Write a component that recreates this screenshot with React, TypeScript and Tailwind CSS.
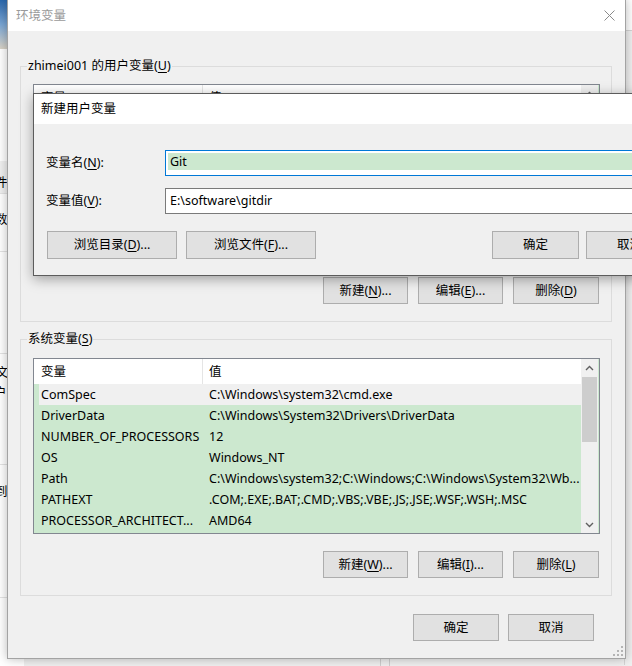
import React from "react";

function M({ children }: { children: React.ReactNode }) {
  return <span className="underline decoration-1 underline-offset-[2px]">{children}</span>;
}

function Btn({ children, className }: { children: React.ReactNode; className: string }) {
  return (
    <div className={"flex shrink-0 items-center justify-center border border-[#adadad] bg-[#e1e1e1] text-black " + className}>
      {children}
    </div>
  );
}

function Up() {
  return (
    <svg width="9" height="6" viewBox="0 0 9 6">
      <path d="M1 5 L4.5 1.5 L8 5" stroke="#606060" strokeWidth="1.4" fill="none" />
    </svg>
  );
}
function Down() {
  return (
    <svg width="9" height="6" viewBox="0 0 9 6">
      <path d="M1 1 L4.5 4.5 L8 1" stroke="#606060" strokeWidth="1.4" fill="none" />
    </svg>
  );
}

type Row = [string, string];

const sysRows: Row[] = [
  ["ComSpec", "C:\\Windows\\system32\\cmd.exe"],
  ["DriverData", "C:\\Windows\\System32\\Drivers\\DriverData"],
  ["NUMBER_OF_PROCESSORS", "12"],
  ["OS", "Windows_NT"],
  ["Path", "C:\\Windows\\system32;C:\\Windows;C:\\Windows\\System32\\Wb..."],
  ["PATHEXT", ".COM;.EXE;.BAT;.CMD;.VBS;.VBE;.JS;.JSE;.WSF;.WSH;.MSC"],
  ["PROCESSOR_ARCHITECT...", "AMD64"],
];

function ListBox({ rows }: { rows: Row[] }) {
  return (
    <div className="flex h-[176px] w-[567px] border border-[#828790] bg-[#cce8cf]">
      <div className="flex w-[547px] flex-col overflow-hidden">
        <div className="flex h-[25px] shrink-0 items-center bg-white">
          <div className="flex h-full w-[169px] shrink-0 items-center border-r border-[#e5e5e5] pl-[7px]">变量</div>
          <div className="pl-[6px]">值</div>
        </div>
        {rows.map((r, i) => (
          <div
            key={i}
            className={
              i === 0
                ? "ml-[5px] flex h-[21px] shrink-0 items-center whitespace-nowrap bg-[#f0f0f0]"
                : "flex h-[21px] shrink-0 items-center whitespace-nowrap"
            }
          >
            <div className={i === 0 ? "w-[164px] shrink-0 overflow-hidden pl-[2px]" : "w-[169px] shrink-0 overflow-hidden pl-[7px]"}>
              {r[0]}
            </div>
            <div className="pl-[6px]">{r[1]}</div>
          </div>
        ))}
      </div>
      <div className="flex w-[17px] flex-col bg-[#f0f0f0]">
        <div className="flex h-[17px] items-center justify-center">
          <Up />
        </div>
        <div className="mx-[1px] mt-[1px] h-[65px] bg-[#cdcdcd]" />
        <div className="flex-1" />
        <div className="flex h-[17px] items-center justify-center">
          <Down />
        </div>
      </div>
    </div>
  );
}

export default function App() {
  return (
    <div className="relative h-[666px] w-[632px] overflow-hidden bg-[#f0f0f0] font-['Noto_Sans','Noto_Sans_CJK_SC',sans-serif] text-[12.5px] leading-[16px] text-black">
      {/* background window at the left */}
      <div className="absolute left-0 top-0 h-[666px] w-[24px] bg-white">
        <div className="h-[49px] bg-gradient-to-b from-[#2a68ad] via-[#7aa6d4] to-[#d9d3c6]" />
        <div className="h-[112px]" />
        <div className="h-[33px] border-b border-[#e3e3e3] bg-[#f0f0f0]" />
        <div className="h-[58px] border-b border-[#e3e3e3]" />
        <div className="h-[102px] border-b border-[#e3e3e3]" />
        <div className="h-[111px] border-b border-[#e3e3e3]" />
        <div className="h-[133px] border-b border-[#e3e3e3]" />
        <span className="absolute left-[-5px] top-[175px]">件</span>
        <span className="absolute left-[-5px] top-[212px]">数</span>
        <span className="absolute left-[-4px] top-[365px]">文</span>
        <span className="absolute left-[-6px] top-[385px]">户</span>
        <span className="absolute left-[-5px] top-[484px]">到</span>
      </div>
      {/* background window at the right */}
      <div className="absolute right-0 top-0 h-[666px] w-[12px] bg-[#f0f0f0]">
        <div className="h-[31px] border-b border-[#d5d5d5] bg-white" />
        <div className="ml-[4px] mt-[244px] h-[390px] border-l border-[#d5d5d5]" />
      </div>
      {/* background at the bottom */}
      <div className="absolute bottom-0 left-[380px] h-[10px] w-[10px] border-x border-[#cfcfcf]" />

      {/* 环境变量 dialog */}
      <div className="absolute left-[7px] top-[-1px] flex h-[660px] w-[619px] flex-col border border-[#a3a3a3] bg-[#f0f0f0] shadow-[0_0_10px_rgba(0,0,0,0.28)]">
        <div className="flex h-[31px] shrink-0 items-center justify-between bg-white pl-[8px] pr-[10px]">
          <span className="text-[#9a9a9a]">环境变量</span>
          <svg width="11" height="11" viewBox="0 0 11 11">
            <path d="M0.5 0.5 L10.5 10.5 M10.5 0.5 L0.5 10.5" stroke="#8a8a8a" strokeWidth="1" fill="none" />
          </svg>
        </div>
        <div className="flex flex-1 flex-col pl-[12px] pr-[13px] pt-[27px]">
          <fieldset className="border border-[#dcdcdc] pb-[17px]">
            <legend className="ml-[6px] px-[1px]">
              zhimei001 的用户变量(<M>U</M>)
            </legend>
            <div className="pl-[12px] pr-[11px] pt-[10px]">
              <ListBox rows={[]} />
              <div className="mt-[17px] flex justify-end gap-[10px] pr-[1px]">
                <Btn className="h-[27px] w-[85px]">
                  新建(<M>N</M>)...
                </Btn>
                <Btn className="h-[27px] w-[85px]">
                  编辑(<M>E</M>)...
                </Btn>
                <Btn className="h-[27px] w-[86px]">
                  删除(<M>D</M>)
                </Btn>
              </div>
            </div>
          </fieldset>
          <fieldset className="mt-[9px] border border-[#dcdcdc] pb-[17px]">
            <legend className="ml-[6px] px-[1px]">
              系统变量(<M>S</M>)
            </legend>
            <div className="pl-[12px] pr-[11px] pt-[11px]">
              <ListBox rows={sysRows} />
              <div className="mt-[17px] flex justify-end gap-[10px] pr-[1px]">
                <Btn className="h-[27px] w-[85px]">
                  新建(<M>W</M>)...
                </Btn>
                <Btn className="h-[27px] w-[85px]">
                  编辑(<M>I</M>)...
                </Btn>
                <Btn className="h-[27px] w-[86px]">
                  删除(<M>L</M>)
                </Btn>
              </div>
            </div>
          </fieldset>
          <div className="mr-[18px] mt-[18px] flex justify-end gap-[9px]">
            <Btn className="h-[27px] w-[86px]">确定</Btn>
            <Btn className="h-[27px] w-[86px]">取消</Btn>
          </div>
        </div>
        <svg className="absolute bottom-[2px] right-[2px]" width="10" height="10" viewBox="0 0 10 10">
          <rect x="8" y="0" width="2" height="2" fill="#b4b4b4" />
          <rect x="4" y="4" width="2" height="2" fill="#b4b4b4" />
          <rect x="8" y="4" width="2" height="2" fill="#b4b4b4" />
          <rect x="0" y="8" width="2" height="2" fill="#b4b4b4" />
          <rect x="4" y="8" width="2" height="2" fill="#b4b4b4" />
          <rect x="8" y="8" width="2" height="2" fill="#b4b4b4" />
        </svg>
      </div>

      {/* 新建用户变量 dialog */}
      <div className="absolute left-[33px] top-[93px] flex h-[183px] w-[653px] flex-col border border-[#5c5c5c] bg-[#f0f0f0] shadow-[0_3px_12px_rgba(0,0,0,0.35)]">
        <div className="flex h-[30px] shrink-0 items-center bg-white pl-[7px]">新建用户变量</div>
        <div className="flex flex-1 flex-col pl-[12px] pr-[12px] pt-[26px]">
          <div className="flex h-[26px] items-center">
            <div className="w-[119px] shrink-0">
              变量名(<M>N</M>):
            </div>
            <div className="h-[26px] flex-1 border border-[#0078d7] bg-white px-[2px] pt-[2px]">
              <div className="flex h-[17px] items-center bg-[#cce8cf] pl-[2px]">Git</div>
            </div>
          </div>
          <div className="mt-[12px] flex h-[26px] items-center">
            <div className="w-[119px] shrink-0">
              变量值(<M>V</M>):
            </div>
            <div className="flex h-[26px] flex-1 items-center border border-[#7a7a7a] bg-white pl-[4px]">E:\software\gitdir</div>
          </div>
          <div className="mt-[17px] flex pl-[1px]">
            <Btn className="h-[28px] w-[130px]">
              浏览目录(<M>D</M>)...
            </Btn>
            <Btn className="ml-[9px] h-[28px] w-[130px]">
              浏览文件(<M>F</M>)...
            </Btn>
            <div className="flex-1" />
            <Btn className="h-[28px] w-[87px]">确定</Btn>
            <Btn className="ml-[7px] h-[28px] w-[87px]">取消</Btn>
          </div>
        </div>
      </div>
    </div>
  );
}
